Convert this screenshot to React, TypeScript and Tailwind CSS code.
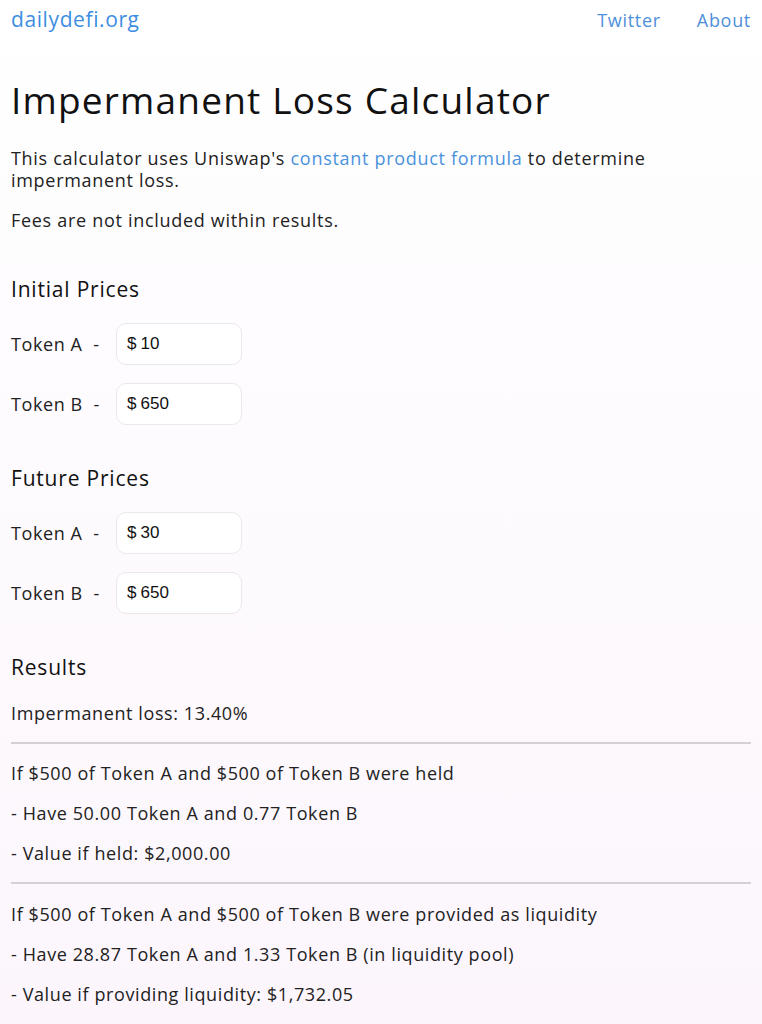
import { useState } from "react";

const font = { fontFamily: '"Open Sans", "Liberation Sans", sans-serif' };

function PriceRow({ label, value }: { label: string; value: string }) {
  return (
    <div className="flex items-center h-[42px] mb-[18px]">
      <span className="w-[105px] text-[18px] tracking-[0.6px] text-[#222]">
        {label}&nbsp;&nbsp;-
      </span>
      <div className="flex items-center w-[126px] h-[42px] rounded-[10px] border border-[#ebe8ed] bg-white px-[10px] text-[17px] text-[#111] font-['Liberation_Sans',sans-serif]">
        <span>$</span>
        <span className="ml-[4px]">{value}</span>
      </div>
    </div>
  );
}

export default function App() {
  const [initial] = useState({ a: "10", b: "650" });
  const [future] = useState({ a: "30", b: "650" });

  return (
    <div
      className="min-h-[1024px] w-full bg-gradient-to-b from-white to-[#fcf6fc] px-[11px] text-[#222]"
      style={font}
    >
      {/* Header */}
      <div className="flex items-center justify-between h-[40px]">
        <a className="text-[21px] tracking-[0.6px] text-[#3d8ee2]">dailydefi.org</a>
        <div className="flex gap-[36px] text-[18px] tracking-[0.7px] text-[#4f8fdb]">
          <a>Twitter</a>
          <a>About</a>
        </div>
      </div>

      <h1 className="mt-[38px] text-[37px] leading-[44px] tracking-[1.2px] text-[#111]">
        Impermanent Loss Calculator
      </h1>

      <div className="text-[18px] leading-[22px] tracking-[0.7px]">
        <p className="mt-[25px]">
          This calculator uses Uniswap's{" "}
          <span className="text-[#4a92dc]">constant product formula</span> to determine impermanent
          loss.
        </p>
        <p className="mt-[18px]">Fees are not included within results.</p>
      </div>

      <h2 className="mt-[44px] text-[21px] leading-[28px] tracking-[0.8px] text-[#111]">Initial Prices</h2>
      <div className="mt-[20px]">
        <PriceRow label="Token A" value={initial.a} />
        <PriceRow label="Token B" value={initial.b} />
      </div>

      <h2 className="mt-[39px] text-[21px] leading-[28px] tracking-[0.8px] text-[#111]">Future Prices</h2>
      <div className="mt-[20px]">
        <PriceRow label="Token A" value={future.a} />
        <PriceRow label="Token B" value={future.b} />
      </div>

      <h2 className="mt-[39px] text-[21px] leading-[28px] tracking-[0.8px] text-[#111]">Results</h2>
      <div className="text-[18px] leading-[22px] tracking-[0.6px]">
        <p className="mt-[21px]">Impermanent loss: 13.40%</p>

        <hr className="mt-[18px] border-t-2 border-[#d4d1d6]" />
        <p className="mt-[18px]">If $500 of Token A and $500 of Token B were held</p>
        <p className="mt-[18px]">- Have 50.00 Token A and 0.77 Token B</p>
        <p className="mt-[18px]">- Value if held: $2,000.00</p>

        <hr className="mt-[18px] border-t-2 border-[#d4d1d6]" />
        <p className="mt-[19px]">If $500 of Token A and $500 of Token B were provided as liquidity</p>
        <p className="mt-[18px]">- Have 28.87 Token A and 1.33 Token B (in liquidity pool)</p>
        <p className="mt-[18px]">- Value if providing liquidity: $1,732.05</p>
      </div>
    </div>
  );
}
